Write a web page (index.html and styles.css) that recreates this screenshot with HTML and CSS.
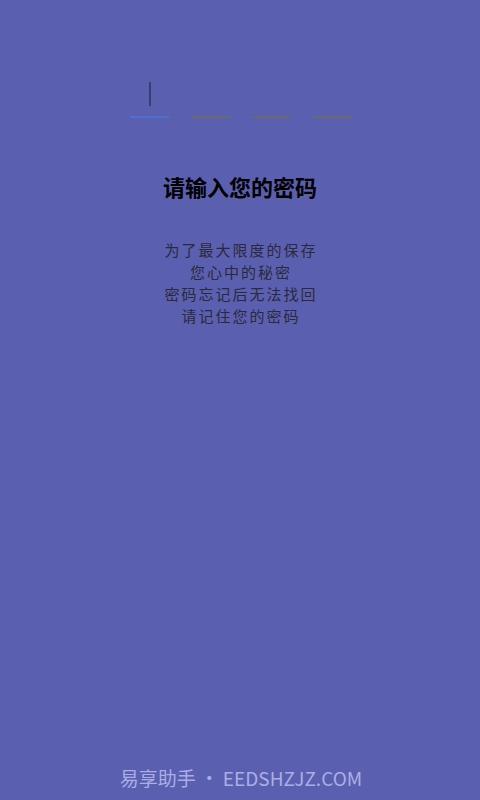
FILE: index.html
```html
<!DOCTYPE html>
<html lang="zh">
<head>
<meta charset="utf-8">
<link rel="stylesheet" href="styles.css">
</head>
<body>
<div class="page">
  <div class="pin">
    <div class="box active"><span class="cursor"></span></div>
    <div class="box"></div>
    <div class="box"></div>
    <div class="box"></div>
  </div>
  <h1 class="title">请输入您的密码</h1>
  <div class="desc">
    <p>为了最大限度的保存</p>
    <p>您心中的秘密</p>
    <p>密码忘记后无法找回</p>
    <p>请记住您的密码</p>
  </div>
  <div class="spacer"></div>
  <div class="footer">易享助手<span class="dot">•</span>EEDSHZJZ.COM</div>
</div>
</body>
</html>
```

FILE: styles.css
```css
html, body {
  margin: 0;
  padding: 0;
  height: 100%;
}
body {
  background: #5b5faf;
  font-family: "Noto Sans CJK SC", "Noto Sans", sans-serif;
}
.page {
  height: 800px;
  display: flex;
  flex-direction: column;
  align-items: center;
}
.pin {
  margin-top: 80px;
  display: flex;
  gap: 22px;
  margin-left: 2px;
}
.box {
  width: 39px;
  height: 38px;
  border-bottom: 2px solid #6a6a6e;
  display: flex;
  justify-content: center;
  box-sizing: border-box;
}
.box.active {
  border-bottom-color: #4f6fcc;
}
.cursor {
  display: block;
  width: 2px;
  height: 24px;
  margin-top: 2px;
  background: #3b3d72;
}
.title {
  margin: 53px 0 0;
  font-size: 22px;
  font-weight: bold;
  color: #000;
  line-height: 30px;
}
.desc {
  margin-top: 38px;
  text-align: center;
  color: #2a2a3c;
  font-size: 15px;
  letter-spacing: 2px;
  line-height: 22px;
}
.desc p {
  margin: 0 0 0 2px;
}
.spacer {
  flex: 1;
}
.footer {
  font-size: 19px;
  color: #aaaee6;
  line-height: 26px;
  margin-bottom: 9px;
  margin-left: 2px;
}
.dot {
  margin: 0 4px;
}
```
